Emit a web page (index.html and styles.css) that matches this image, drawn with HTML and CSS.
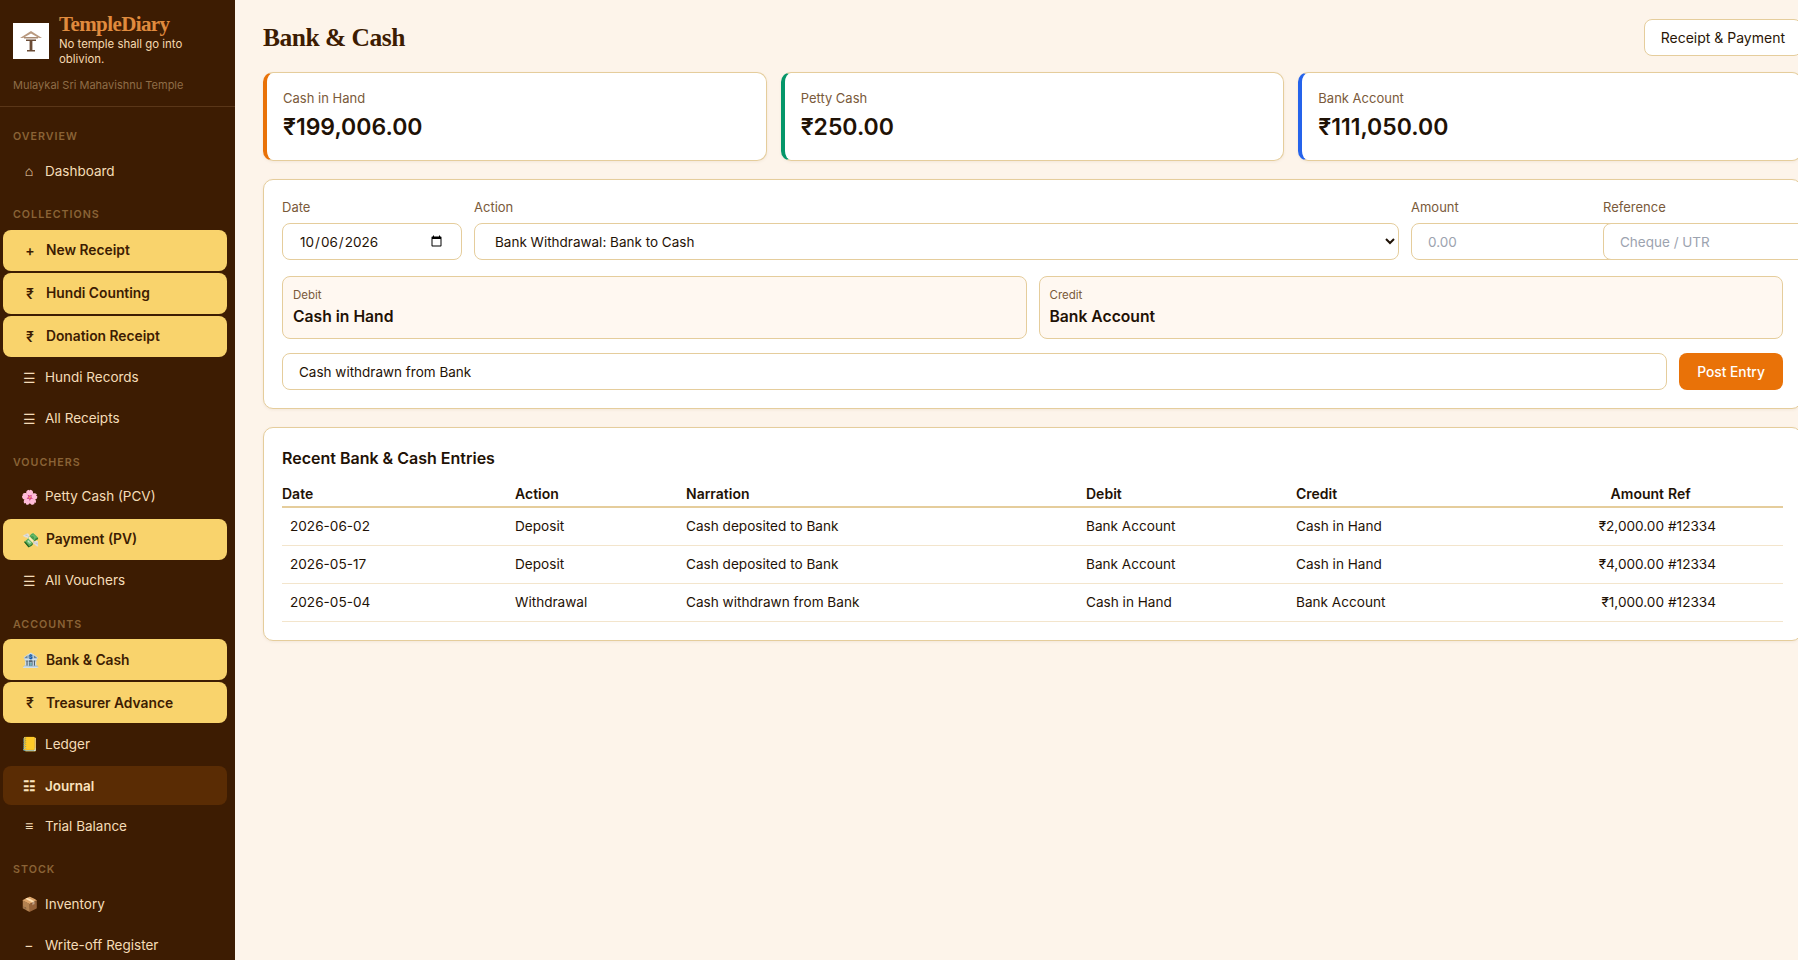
FILE: index.html
```html
<!DOCTYPE html>
<html lang="en">

<head>
    <meta charset="UTF-8">
    <meta name="viewport" content="width=device-width, initial-scale=1.0">
    <title>Bank &amp; Cash</title>
    <link rel="stylesheet" href="styles.css">
</head>

<body>
    <div class="app">
        <aside class="sidebar">
            <div class="brand">
                <div class="brand-top">
                    <div class="logo">
                        <svg width="24" height="24" viewBox="0 0 24 24">
                            <path d="M1 9 L12 2 L23 9 L20 9 L12 4.5 L4 9 Z" fill="#b99a80"/>
                            <path d="M5 8 H19 V9.5 H5 Z" fill="#a88a72"/>
                            <path d="M7 10.5 H17 V12 H13.4 V21 H16 V22.5 H8 V21 H10.6 V12 H7 Z" fill="#6b4c36"/>
                        </svg>
                    </div>
                    <div>
                        <div class="brand-name">TempleDiary</div>
                        <div class="brand-tag">No temple shall go into oblivion.</div>
                    </div>
                </div>
                <div class="brand-temple">Mulaykal Sri Mahavishnu Temple</div>
            </div>
            <nav class="nav">
                <div class="nav-label">OVERVIEW</div>
                <a class="nav-item"><span class="nav-icon">⌂</span>Dashboard</a>

                <div class="nav-label">COLLECTIONS</div>
                <a class="nav-item hot"><span class="nav-icon">+</span>New Receipt</a>
                <a class="nav-item hot"><span class="nav-icon">₹</span>Hundi Counting</a>
                <a class="nav-item hot"><span class="nav-icon">₹</span>Donation Receipt</a>
                <a class="nav-item"><span class="nav-icon">☰</span>Hundi Records</a>
                <a class="nav-item"><span class="nav-icon">☰</span>All Receipts</a>

                <div class="nav-label">VOUCHERS</div>
                <a class="nav-item"><span class="nav-icon">🌸</span>Petty Cash (PCV)</a>
                <a class="nav-item hot"><span class="nav-icon">💸</span>Payment (PV)</a>
                <a class="nav-item"><span class="nav-icon">☰</span>All Vouchers</a>

                <div class="nav-label">ACCOUNTS</div>
                <a class="nav-item hot"><span class="nav-icon">🏦</span>Bank &amp; Cash</a>
                <a class="nav-item hot"><span class="nav-icon">₹</span>Treasurer Advance</a>
                <a class="nav-item"><span class="nav-icon">📒</span>Ledger</a>
                <a class="nav-item current"><span class="nav-icon">☷</span>Journal</a>
                <a class="nav-item"><span class="nav-icon">≡</span>Trial Balance</a>

                <div class="nav-label">STOCK</div>
                <a class="nav-item"><span class="nav-icon">📦</span>Inventory</a>
                <a class="nav-item"><span class="nav-icon">−</span>Write-off Register</a>
            </nav>
        </aside>

        <main class="main">
            <div class="page-head">
                <h1>Bank &amp; Cash</h1>
                <button class="btn-light">Receipt &amp; Payment</button>
            </div>

            <div class="stats">
                <div class="stat stat-orange">
                    <div class="stat-label">Cash in Hand</div>
                    <div class="stat-value">₹199,006.00</div>
                </div>
                <div class="stat stat-green">
                    <div class="stat-label">Petty Cash</div>
                    <div class="stat-value">₹250.00</div>
                </div>
                <div class="stat stat-blue">
                    <div class="stat-label">Bank Account</div>
                    <div class="stat-value">₹111,050.00</div>
                </div>
            </div>

            <section class="card form-card">
                <div class="form-row">
                    <div>
                        <label>Date</label>
                        <input class="field" type="date" value="2026-10-06">
                    </div>
                    <div>
                        <label>Action</label>
                        <select class="field">
                            <option>Bank Withdrawal: Bank to Cash</option>
                        </select>
                    </div>
                    <div>
                        <label>Amount</label>
                        <input class="field wide" type="text" placeholder="0.00">
                    </div>
                    <div>
                        <label>Reference</label>
                        <input class="field wide" type="text" placeholder="Cheque / UTR">
                    </div>
                </div>
                <div class="accounts">
                    <div class="account">
                        <div class="account-label">Debit</div>
                        <div class="account-name">Cash in Hand</div>
                    </div>
                    <div class="account">
                        <div class="account-label">Credit</div>
                        <div class="account-name">Bank Account</div>
                    </div>
                </div>
                <div class="post-row">
                    <input class="field" type="text" value="Cash withdrawn from Bank">
                    <button class="btn-post">Post Entry</button>
                </div>
            </section>

            <section class="card entries-card">
                <h2>Recent Bank &amp; Cash Entries</h2>
                <table>
                    <colgroup>
                        <col class="col-date">
                        <col class="col-action">
                        <col class="col-narration">
                        <col class="col-debit">
                        <col class="col-credit">
                        <col class="col-amount">
                        <col class="col-ref">
                    </colgroup>
                    <thead>
                        <tr>
                            <th>Date</th>
                            <th>Action</th>
                            <th>Narration</th>
                            <th>Debit</th>
                            <th>Credit</th>
                            <th class="num">Amount</th>
                            <th>Ref</th>
                        </tr>
                    </thead>
                    <tbody>
                        <tr>
                            <td>2026-06-02</td>
                            <td>Deposit</td>
                            <td>Cash deposited to Bank</td>
                            <td>Bank Account</td>
                            <td>Cash in Hand</td>
                            <td class="num">₹2,000.00</td>
                            <td>#12334</td>
                        </tr>
                        <tr>
                            <td>2026-05-17</td>
                            <td>Deposit</td>
                            <td>Cash deposited to Bank</td>
                            <td>Bank Account</td>
                            <td>Cash in Hand</td>
                            <td class="num">₹4,000.00</td>
                            <td>#12334</td>
                        </tr>
                        <tr>
                            <td>2026-05-04</td>
                            <td>Withdrawal</td>
                            <td>Cash withdrawn from Bank</td>
                            <td>Cash in Hand</td>
                            <td>Bank Account</td>
                            <td class="num">₹1,000.00</td>
                            <td>#12334</td>
                        </tr>
                    </tbody>
                </table>
            </section>
        </main>
    </div>
</body>

</html>
```

FILE: styles.css
```css
* {
    box-sizing: border-box;
}

html,
body {
    margin: 0;
    height: 100%;
    overflow: hidden;
}

body {
    background: #fdf4ea;
    color: #1f1206;
    font-family: "Inter", "Noto Sans", sans-serif;
    font-size: 13.5px;
}

.app {
    display: grid;
    grid-template-columns: 235px 1595px;
    height: 960px;
}

/* sidebar */
.sidebar {
    background: #3d1c02;
    height: 960px;
    overflow: hidden;
}

.brand {
    padding: 13px 13px 13px;
    border-bottom: 1px solid #5a3618;
}

.brand-top {
    display: flex;
    align-items: flex-start;
    gap: 10px;
}

.logo {
    width: 36px;
    height: 36px;
    flex: none;
    margin-top: 10px;
    background: #fff;
    display: flex;
    align-items: center;
    justify-content: center;
}

.brand-name {
    font-family: "Liberation Serif", serif;
    font-weight: 700;
    font-size: 21px;
    letter-spacing: -0.6px;
    line-height: 22px;
    margin-bottom: 2px;
    color: #e08b3e;
}

.brand-tag {
    font-size: 11.4px;
    line-height: 15px;
    color: #f5d9b0;
}

.brand-temple {
    margin-top: 11px;
    font-size: 11px;
    line-height: 15px;
    color: #8f6d47;
}

.nav {
    padding: 6px 8px 0 3px;
}

.nav-label {
    margin: 17px 0 6px 10px;
    font-size: 10.7px;
    line-height: 14px;
    font-weight: 600;
    letter-spacing: 1px;
    color: #8a6336;
}

.nav-item {
    display: flex;
    align-items: center;
    height: 41px;
    padding-left: 15px;
    color: #f5dcb8;
    font-size: 13.5px;
}

.nav-icon {
    width: 22px;
    margin-right: 5px;
    text-align: center;
    font-size: 14px;
}

.nav-item.hot {
    margin-top: 2px;
    padding-left: 16px;
    background: #f9d36c;
    border-radius: 8px;
    color: #3d1c02;
    font-size: 13.8px;
    font-weight: 600;
}

.nav-label + .nav-item.hot {
    margin-top: 7.5px;
}

.nav-item.current {
    height: 39px;
    margin-top: 2px;
    background: #5a2c04;
    border-radius: 8px;
    font-weight: 600;
    color: #fbe3be;
}

/* main */
.main {
    padding: 19px 28px 0;
}

.page-head {
    display: flex;
    align-items: center;
    justify-content: space-between;
    margin-bottom: 16px;
}

h1 {
    margin: 0;
    font-family: "Liberation Serif", serif;
    font-size: 25.5px;
    letter-spacing: -0.5px;
    font-weight: 700;
    color: #3d1c02;
}

.btn-light {
    height: 37px;
    padding: 0 16px;
    background: #fff;
    border: 1px solid #e5cd9c;
    border-radius: 8px;
    font: inherit;
    font-size: 14px;
    color: #2a1606;
}

.stats {
    display: grid;
    grid-template-columns: repeat(3, 1fr);
    gap: 14px;
    margin-bottom: 18px;
}

.stat {
    height: 89px;
    padding: 16px;
    background: #fff;
    border: 1px solid #e5cd9c;
    border-left-width: 4px;
    border-radius: 10px;
    box-shadow: 0 1px 3px rgba(120, 80, 20, 0.08);
}

.stat-orange {
    border-left-color: #e97208;
}

.stat-green {
    border-left-color: #059669;
}

.stat-blue {
    border-left-color: #2563eb;
}

.stat-label {
    font-size: 13px;
    line-height: 18px;
    color: #7a5a3a;
}

.stat-value {
    margin-top: 5px;
    font-size: 23px;
    line-height: 30px;
    font-weight: 600;
    color: #1f1206;
}

.card {
    margin-bottom: 18px;
    padding: 18px;
    background: #fff;
    border: 1px solid #e5cd9c;
    border-radius: 10px;
    box-shadow: 0 1px 3px rgba(120, 80, 20, 0.08);
}

.form-card {
    padding-top: 19px;
}

.entries-card {
    padding-top: 20px;
}

.form-row {
    display: grid;
    grid-template-columns: 180px 1fr 180px 180px;
    gap: 12px;
}

label {
    display: block;
    margin-bottom: 7px;
    font-size: 13px;
    line-height: 17px;
    color: #7a5a3a;
}

.field {
    display: block;
    width: 100%;
    height: 37px;
    padding: 0 16px;
    background: #fff;
    border: 1px solid #e5cd9c;
    border-radius: 8px;
    font: inherit;
    color: #1f1206;
}

.field::placeholder {
    color: #9ca3af;
}

.wide {
    width: 240px;
    position: relative;
}

.accounts {
    display: grid;
    grid-template-columns: 1fr 1fr;
    gap: 12px;
    margin-top: 16px;
}

.account {
    height: 63px;
    padding: 10px;
    background: #fff8f1;
    border: 1px solid #e5cd9c;
    border-radius: 8px;
}

.account-label {
    font-size: 11.5px;
    line-height: 16px;
    color: #7a5a3a;
}

.account-name {
    margin-top: 4px;
    font-size: 15.7px;
    line-height: 20px;
    font-weight: 600;
}

.post-row {
    display: flex;
    gap: 12px;
    margin-top: 14px;
}

.btn-post {
    flex: none;
    width: 104px;
    height: 37px;
    background: #e97208;
    border: none;
    border-radius: 8px;
    font: inherit;
    font-size: 13.8px;
    font-weight: 500;
    color: #fff;
}

h2 {
    margin: 0 0 16px;
    font-size: 16px;
    line-height: 20px;
    font-weight: 600;
}

table {
    width: 100%;
    table-layout: fixed;
    border-collapse: collapse;
}

.col-date {
    width: 233px;
}

.col-action {
    width: 171px;
}

.col-narration {
    width: 400px;
}

.col-debit {
    width: 210px;
}

.col-credit {
    width: 240px;
}

.col-amount {
    width: 132px;
}

th {
    height: 23px;
    padding: 0 0 4px;
    text-align: left;
    font-size: 14px;
    font-weight: 600;
    border-bottom: 2px solid #e5cd9c;
}

td {
    height: 38px;
    padding: 0;
    font-size: 13.6px;
    border-bottom: 1px solid #f3e5cc;
}

td:first-child {
    padding-left: 8px;
}

th.num,
td.num {
    text-align: right;
    padding-right: 4px;
}
```
